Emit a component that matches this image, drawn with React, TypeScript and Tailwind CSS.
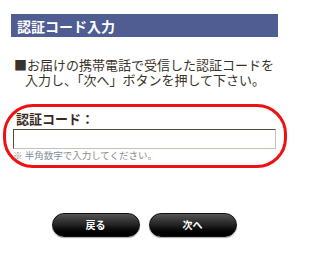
import React from 'react';

const font = { fontFamily: '"Noto Sans CJK JP", "Noto Sans", sans-serif' };

const PillButton: React.FC<{ label: string }> = ({ label }) => (
  <button
    type="button"
    className="flex h-[24px] w-[88px] items-center justify-center rounded-full border border-[#111] bg-gradient-to-b from-[#555] via-[#222] to-[#000] text-[10px] font-bold leading-none text-white shadow-[0_1px_1px_rgba(0,0,0,0.35)]"
  >
    {label}
  </button>
);

const App: React.FC = () => {
  return (
    <div className="h-[269px] w-[288px] bg-white text-[#3a3228]" style={font}>
      <div className="pt-[14px] pl-[11px] pr-[10px]">
        <h1 className="flex h-[23px] items-center bg-[#4f5d92] pl-[6px] text-[14px] font-bold leading-none text-white">
          認証コード入力
        </h1>
      </div>

      <div className="mt-[20px] pl-[14px] text-[13px] leading-[15px]">
        <p className="whitespace-nowrap">■お届けの携帯電話で受信した認証コードを</p>
        <p className="whitespace-nowrap pl-[11px]">入力し、「次へ」ボタンを押して下さい。</p>
      </div>

      <div className="mt-[17px] ml-[3px] h-[64px] w-[284px] rounded-[30px] border-[3px] border-[#ee1111] pt-[2px] pl-[7px] pr-[5px]">
        <label className="block pl-[3px] text-[13px] font-bold leading-[20px] text-[#3a2a1c]">認証コード：</label>
        <input
          type="text"
          className="block h-[20px] w-[263px] border border-t-[#5b4a3a] border-l-[#5b4a3a] border-r-[#c8c0b8] border-b-[#c8c0b8] bg-white outline-none"
        />
        <p className="mt-[1px] text-[9.5px] leading-[11px] text-[#8a8a8a]">
          ※ <span className="text-[#7f8ea0]">半角数字</span>で入力してください。
        </p>
      </div>

      <div className="mt-[45px] flex justify-center gap-[9px]">
        <PillButton label="戻る" />
        <PillButton label="次へ" />
      </div>
    </div>
  );
};

export default App;
